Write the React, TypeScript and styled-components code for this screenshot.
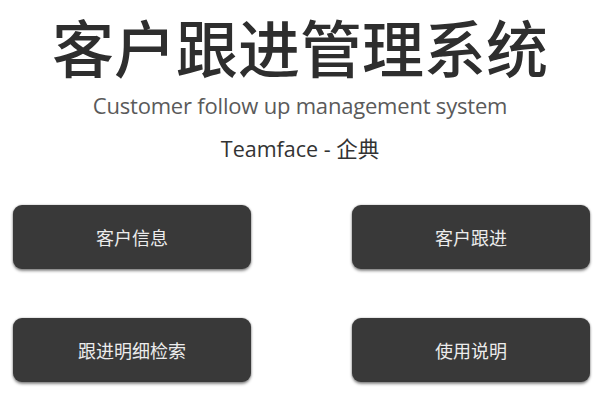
import React from 'react';
import styled, { createGlobalStyle } from 'styled-components';

const GlobalStyle = createGlobalStyle`
  html, body {
    margin: 0;
    padding: 0;
    background: #ffffff;
  }
  body {
    font-family: "Open Sans", "Noto Sans CJK SC", sans-serif;
  }
`;

const Page = styled.div`
  width: 600px;
  height: 400px;
  display: flex;
  flex-direction: column;
  align-items: center;
  box-sizing: border-box;
  padding-top: 14px;
  overflow: hidden;
`;

const Title = styled.h1`
  margin: 0;
  font-family: "Noto Sans CJK SC", sans-serif;
  font-weight: 500;
  font-size: 62px;
  line-height: 64px;
  color: #2e2e2e;
`;

const Subtitle = styled.div`
  margin-top: 12px;
  font-family: "Open Sans", sans-serif;
  font-size: 22px;
  line-height: 30px;
  color: #5a5a5a;
  letter-spacing: -0.2px;
`;

const Brand = styled.div`
  margin-top: 15px;
  font-family: "Open Sans", "Noto Sans CJK SC", sans-serif;
  font-size: 21.5px;
  line-height: 28px;
  color: #333333;
`;

const ButtonGrid = styled.div`
  align-self: stretch;
  display: grid;
  grid-template-columns: 238px 238px;
  justify-content: space-between;
  row-gap: 49px;
  padding: 0 10px 0 13px;
  margin-top: 42px;
`;

const MenuButton = styled.button`
  height: 64px;
  border: none;
  border-radius: 9px;
  background: #393939;
  color: #ececec;
  font-family: "Noto Sans CJK SC", sans-serif;
  font-size: 18px;
  cursor: pointer;
  box-shadow: 0 2px 3px rgba(0, 0, 0, 0.45), 0 0 2px rgba(0, 0, 0, 0.3);
`;

const items = ['客户信息', '客户跟进', '跟进明细检索', '使用说明'];

const App = () => {
  return (
    <>
      <GlobalStyle />
      <Page>
        <Title>客户跟进管理系统</Title>
        <Subtitle>Customer follow up management system</Subtitle>
        <Brand>Teamface - 企典</Brand>
        <ButtonGrid>
          {items.map((label) => (
            <MenuButton key={label}>{label}</MenuButton>
          ))}
        </ButtonGrid>
      </Page>
    </>
  );
};

export default App;
